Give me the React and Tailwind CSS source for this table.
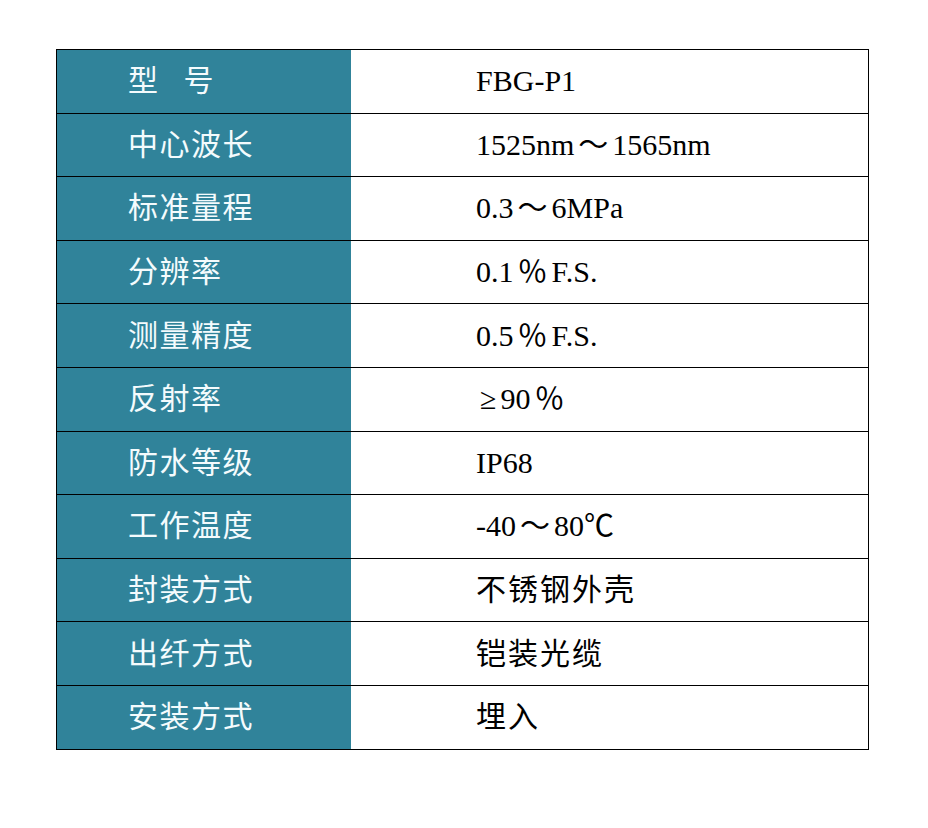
const ROWS = [
  ['型号', 'FBG-P1'],
  ['中心波长', '1525nm～1565nm'],
  ['标准量程', '0.3～6MPa'],
  ['分辨率', '0.1％F.S.'],
  ['测量精度', '0.5％F.S.'],
  ['反射率', '≥90％'],
  ['防水等级', 'IP68'],
  ['工作温度', '-40～80℃'],
  ['封装方式', '不锈钢外壳'],
  ['出纤方式', '铠装光缆'],
  ['安装方式', '埋入'],
];

const WIDE = ['～', '％', '≥'];

function Label({ text }) {
  // the first row has a wide gap between its two characters
  if (text === '型号') {
    return (
      <span>
        型<span className="inline-block w-[24px]" />号
      </span>
    );
  }
  return <span>{text}</span>;
}

function Value({ text }) {
  if (/[\u4e00-\u9fff]/.test(text)) {
    return <span className="tracking-[2px]">{text}</span>;
  }
  return (
    <span>
      {text.split('').map((ch, i) =>
        WIDE.includes(ch) ? (
          <span key={i} className="px-[4px]">{ch}</span>
        ) : (
          <span key={i}>{ch}</span>
        )
      )}
    </span>
  );
}

export default function App() {
  return (
    <div
      className="min-h-screen bg-white pt-[49px] pl-[56px]"
      style={{ fontFamily: '"Liberation Serif", "Noto Sans CJK SC", serif' }}
    >
      <div className="w-[813px] border-t border-l border-r border-black">
        {ROWS.map(([label, value]) => (
          <div key={label} className="flex h-[63.6px] border-b border-black">
            <div className="w-[294px] shrink-0 bg-[#30839a] pl-[71px] flex items-center text-[30px] leading-none tracking-[1.5px] text-[#f4fbfd]">
              <Label text={label} />
            </div>
            <div className="flex-1 pl-[125px] flex items-center text-[30px] leading-none text-black">
              <Value text={value} />
            </div>
          </div>
        ))}
      </div>
    </div>
  );
}
